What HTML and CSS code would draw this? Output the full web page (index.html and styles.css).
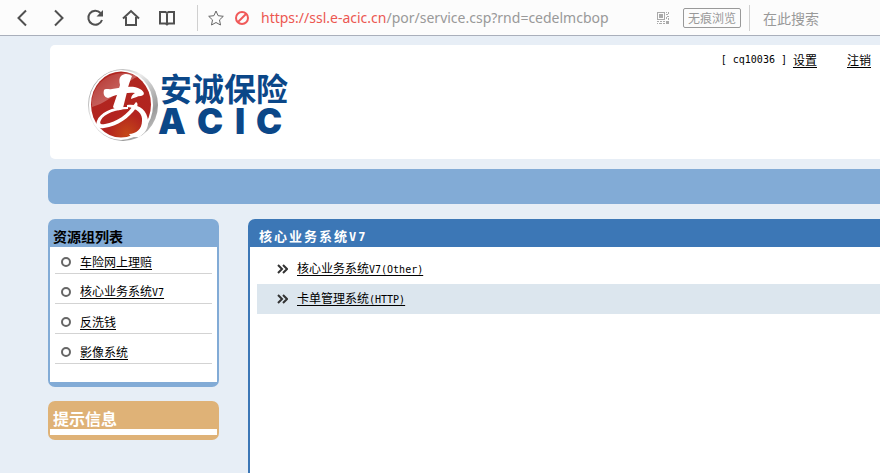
FILE: index.html
```
<!DOCTYPE html>
<html lang="zh-CN">
<head>
<meta charset="utf-8">
<meta name="viewport" content="width=device-width, initial-scale=1">
<title>安诚保险</title>
<link rel="stylesheet" href="styles.css">
</head>
<body>
<div class="toolbar">
  <div class="nav-buttons">
    <button type="button" aria-label="后退"><svg viewBox="0 0 18 18"><path d="M12 1.500 4.500 9l7.500 7.500"/></svg></button>
    <button type="button" aria-label="前进"><svg viewBox="0 0 18 18"><path d="m5 1.500 7.500 7.500L5 16.500"/></svg></button>
    <button type="button" aria-label="刷新"><svg viewBox="0 0 18 18"><path d="M14.500 4A7 7 0 1 0 16 11"/><path d="M17 1v6.500h-6.500z" fill="#505050" stroke="none"/></svg></button>
    <button type="button" aria-label="主页"><svg viewBox="0 0 18 18"><path d="M1 9.500 9 2l8 7.500M4 8v8h10V8"/></svg></button>
    <button type="button" aria-label="书签"><svg viewBox="0 0 18 18"><path d="M2 3h5.500L9 4l1.500-1H16v11.500h-5.500L9 15.500l-1.500-1H2zM9 4v11"/></svg></button>
  </div>
  <div class="address">
    <button type="button" class="small" aria-label="收藏"><svg viewBox="0 0 18 18"><path class="thin" d="m9 2 2.100 4.700 5.200.600-3.800 3.600 1 5.100L9 13.500 4.500 16l1-5.100-3.800-3.600 5.200-.600z"/></svg></button>
    <svg class="blocked" viewBox="0 0 16 16" aria-hidden="true"><circle cx="8" cy="8" r="6"/><path d="m4 12 8-8"/></svg>
    <span class="url"><span class="host">https://ssl.e-acic.cn</span>/por/service.csp?rnd=cedelmcbop</span>
    <svg class="qr" viewBox="0 0 12 12" aria-hidden="true"><path d="M0 0h8v8H0zm1 1v6h6V1z" fill-rule="evenodd"/><path d="M2 2h4v4H2zM9 0h1v1H9zm2 0h1v2h-1zM9 2h2v1H9zm1 2h2v1h-2zM9 5h1v2H9zm2 1h1v2h-1zM0 9h2v1H0zm3 0h2v1H3zm3 0h2v1H6zm3 0h3v3H9zM0 11h1v1H0zm2 0h3v1H2zm4 0h2v1H6z"/></svg>
    <button type="button" class="private">无痕浏览</button>
  </div>
  <input class="search" type="text" aria-label="搜索" placeholder="在此搜索">
</div>

<div class="page">
  <header class="banner">
    <svg class="logo" viewBox="0 0 206 80" role="img" aria-label="安诚保险 ACIC">
      <defs>
        <linearGradient id="rim" x1="0" y1="0" x2="1" y2="1"><stop offset="0" stop-color="#777"/><stop offset=".4" stop-color="#eee"/><stop offset=".75" stop-color="#999"/><stop offset="1" stop-color="#ddd"/></linearGradient>
        <radialGradient id="red" cx=".6" cy=".95" r=".8"><stop offset="0" stop-color="#c54818"/><stop offset=".4" stop-color="#b3241f"/><stop offset="1" stop-color="#b02620"/></radialGradient>
        <linearGradient id="shine" x1="0" y1="0" x2="1" y2="1"><stop offset="0" stop-color="#fff" stop-opacity=".05"/><stop offset="1" stop-color="#fff" stop-opacity=".45"/></linearGradient>
      </defs>
      <ellipse cx="36" cy="41" rx="35" ry="36" fill="url(#rim)"/>
      <ellipse cx="34" cy="41" rx="32" ry="35" fill="#fff"/>
      <ellipse cx="34" cy="40.500" rx="30" ry="33" fill="url(#red)"/>
      <path d="M5 37C7 20 20 9 37 9c5 0 9 1 13 4C37 18 29 36 5 43z" fill="url(#shine)"/>
      <g fill="#fff">
        <path d="M34 12c4-3 8-2 11 0-2 5-4 10-5 16l-4 16c-2 3-7 3-10-1 2-6 5-15 7-22-1-4-1-7 1-9z"/>
        <path d="M17 26c2-2 5 0 8-1 11-2 22-4 28 0 5 3 5 6 1 7-4 0-6 2-10 3 0-3 2-5 4-6-10-1-19 2-27 5-4-1-5-4-4-8z"/>
        <path d="M49 38c2 1 2 4 0 6-7 10-18 18-32 20-6 1-9-2-7-7 3-9 17-15 31-14v2c-12 0-24 5-27 11-2 4 0 5 4 4 12-2 22-9 31-22z"/>
        <path d="M40 41c11-2 20 5 21 15 1 9-4 14-9 17-4 0-8 1-10-3 7 0 13-5 13-13 1-7-5-13-15-14z"/>
      </g>
      <text class="logo-cn" x="73 105 137 169" y="37">安诚保险</text>
      <text class="logo-en" x="71 110 148 169" y="70">ACIC</text>
    </svg>
    <div class="account">
      <span class="user"><span class="half">[ cq10036 ]</span> <a href="#settings">设置</a></span>
      <a href="#logout">注销</a>
    </div>
  </header>

  <div class="strip"></div>

  <div class="columns">
    <aside>
      <section class="panel groups">
        <h2>资源组列表</h2>
        <ul>
          <li><a href="#g1">车险网上理赔</a></li>
          <li><a href="#g2">核心业务系统<span class="half">V7</span></a></li>
          <li><a href="#g3">反洗钱</a></li>
          <li><a href="#g4">影像系统</a></li>
        </ul>
      </section>
      <section class="panel tips">
        <h2>提示信息</h2>
        <div class="tips-body"></div>
      </section>
    </aside>
    <main>
      <h1>核心业务系统<span class="half">V7</span></h1>
      <ul>
        <li><svg viewBox="0 0 11 10" aria-hidden="true"><path d="m1 1 4 4-4 4M6 1l4 4-4 4"/></svg><a href="#r1">核心业务系统<span class="half">V7(Other)</span></a></li>
        <li><svg viewBox="0 0 11 10" aria-hidden="true"><path d="m1 1 4 4-4 4M6 1l4 4-4 4"/></svg><a href="#r2">卡单管理系统<span class="half">(HTTP)</span></a></li>
      </ul>
    </main>
  </div>
</div>
</body>
</html>
```

FILE: styles.css
```
*, *::before { box-sizing: border-box; }

body {
  margin: 0;
  min-height: 100vh;
  display: flex;
  flex-direction: column;
  background: #e7eef6;
  color: #000;
  font: 12px/16px "Noto Sans CJK SC", sans-serif;
}

h1, h2, ul { margin: 0; padding: 0; }
ul { list-style: none; }
a { color: inherit; text-decoration: underline; text-underline-offset: 2px; }
button { padding: 0; border: 0; background: none; font: inherit; }

/* Half-width Latin characters beside full-width Chinese text */
.half { font-family: "DejaVu Sans Mono", monospace; font-size: 10px; }

.toolbar {
  display: flex;
  align-items: center;
  height: 36px;
  padding-left: 14px;
  background: #fcfcfc;
  border-bottom: 1px solid #a9afbb;
}

.nav-buttons { display: flex; gap: 18px; }
.nav-buttons button, .small { width: 18px; height: 18px; }
.toolbar svg { display: block; }
.toolbar button svg { width: 18px; height: 18px; fill: none; stroke: #505050; stroke-width: 2; }
.toolbar .thin { stroke: #666; stroke-width: 1; }

.address {
  flex: 1;
  display: flex;
  align-items: center;
  height: 26px;
  margin-left: 21px;
  padding: 0 8px 0 9px;
  border-left: 1px solid #d0d0d0;
  border-right: 1px solid #d0d0d0;
}
.blocked { width: 16px; height: 16px; margin: 0 11px 0 9px; fill: none; stroke: #f05a5a; stroke-width: 2; }
.url { flex: 1; color: #999; font: 14px/20px "Noto Sans", sans-serif; white-space: nowrap; }
.host { color: #ec5751; }
.qr { width: 12px; height: 12px; margin-right: 14px; fill: #aaa; }
.private {
  height: 20px;
  padding: 0 4px;
  border: 1px solid #999;
  border-radius: 2px;
  color: #999;
  line-height: 16px;
}
.search {
  width: 130px;
  padding: 0 0 0 13px;
  border: 0;
  background: none;
  font: 14px/20px "Noto Sans CJK SC", sans-serif;
}
.search::placeholder { color: #999; opacity: 1; }

.page { flex: 1; display: flex; flex-direction: column; padding: 9px 0 0 48px; }

.banner {
  display: flex;
  justify-content: space-between;
  height: 114px;
  margin-left: 2px;
  padding: 7px 9px 0 37px;
  background: #fff;
  border-radius: 5px 0 0 5px;
}
.logo { width: 206px; height: 80px; margin-top: 12px; }
.logo text { fill: #0b4788; }
.logo-cn { font: 700 32px "Noto Sans CJK SC", sans-serif; }
.logo-en { font: 900 35px Inter, sans-serif; }
.account { display: flex; gap: 30px; }
.user { display: flex; gap: 6px; }
.user .half { white-space: pre; }

.strip { height: 35px; margin-top: 10px; background: #82abd6; border-radius: 7px 0 0 7px; }

.columns { flex: 1; display: grid; grid-template-columns: 171px 1fr; gap: 29px; margin-top: 15px; }

.panel { padding: 0 2px 5px; border-radius: 7px; }
.panel h2 { height: 28px; padding-left: 3px; }
.groups { background: #82abd6; }
.groups h2 { font-size: 14px; line-height: 34px; }
.groups ul { padding: 0 5px 18px; background: #fff; }
.groups li {
  display: flex;
  align-items: center;
  height: 30px;
  padding: 6px 0 0 6px;
  border-bottom: 1px solid #d3d3d3;
}
.groups li:first-child { height: 27px; padding-top: 3px; }
.groups li::before {
  content: "";
  width: 10px;
  height: 10px;
  margin-right: 9px;
  border: 2px solid #666;
  border-radius: 50%;
}

.tips { margin-top: 14px; background: #dfb277; }
.tips h2 { color: #fff; font-size: 16px; line-height: 34px; }
.tips-body { height: 6px; background: #fff; }

main {
  display: flex;
  flex-direction: column;
  padding-left: 2px;
  background: #3c77b6;
  border-top-left-radius: 7px;
}
h1 { height: 28px; padding-left: 9px; color: #fff; font-size: 13px; line-height: 34px; letter-spacing: 2px; }
h1 .half { font-size: 12px; }
main ul { flex: 1; padding: 7px 0 0 7px; background: #fff; }
main li { display: flex; align-items: center; height: 30px; padding-left: 20px; }
main li:nth-child(even) { background: #dce6ee; }
main li svg { width: 11px; height: 10px; margin-right: 9px; fill: none; stroke: #333; stroke-width: 2; }
```
